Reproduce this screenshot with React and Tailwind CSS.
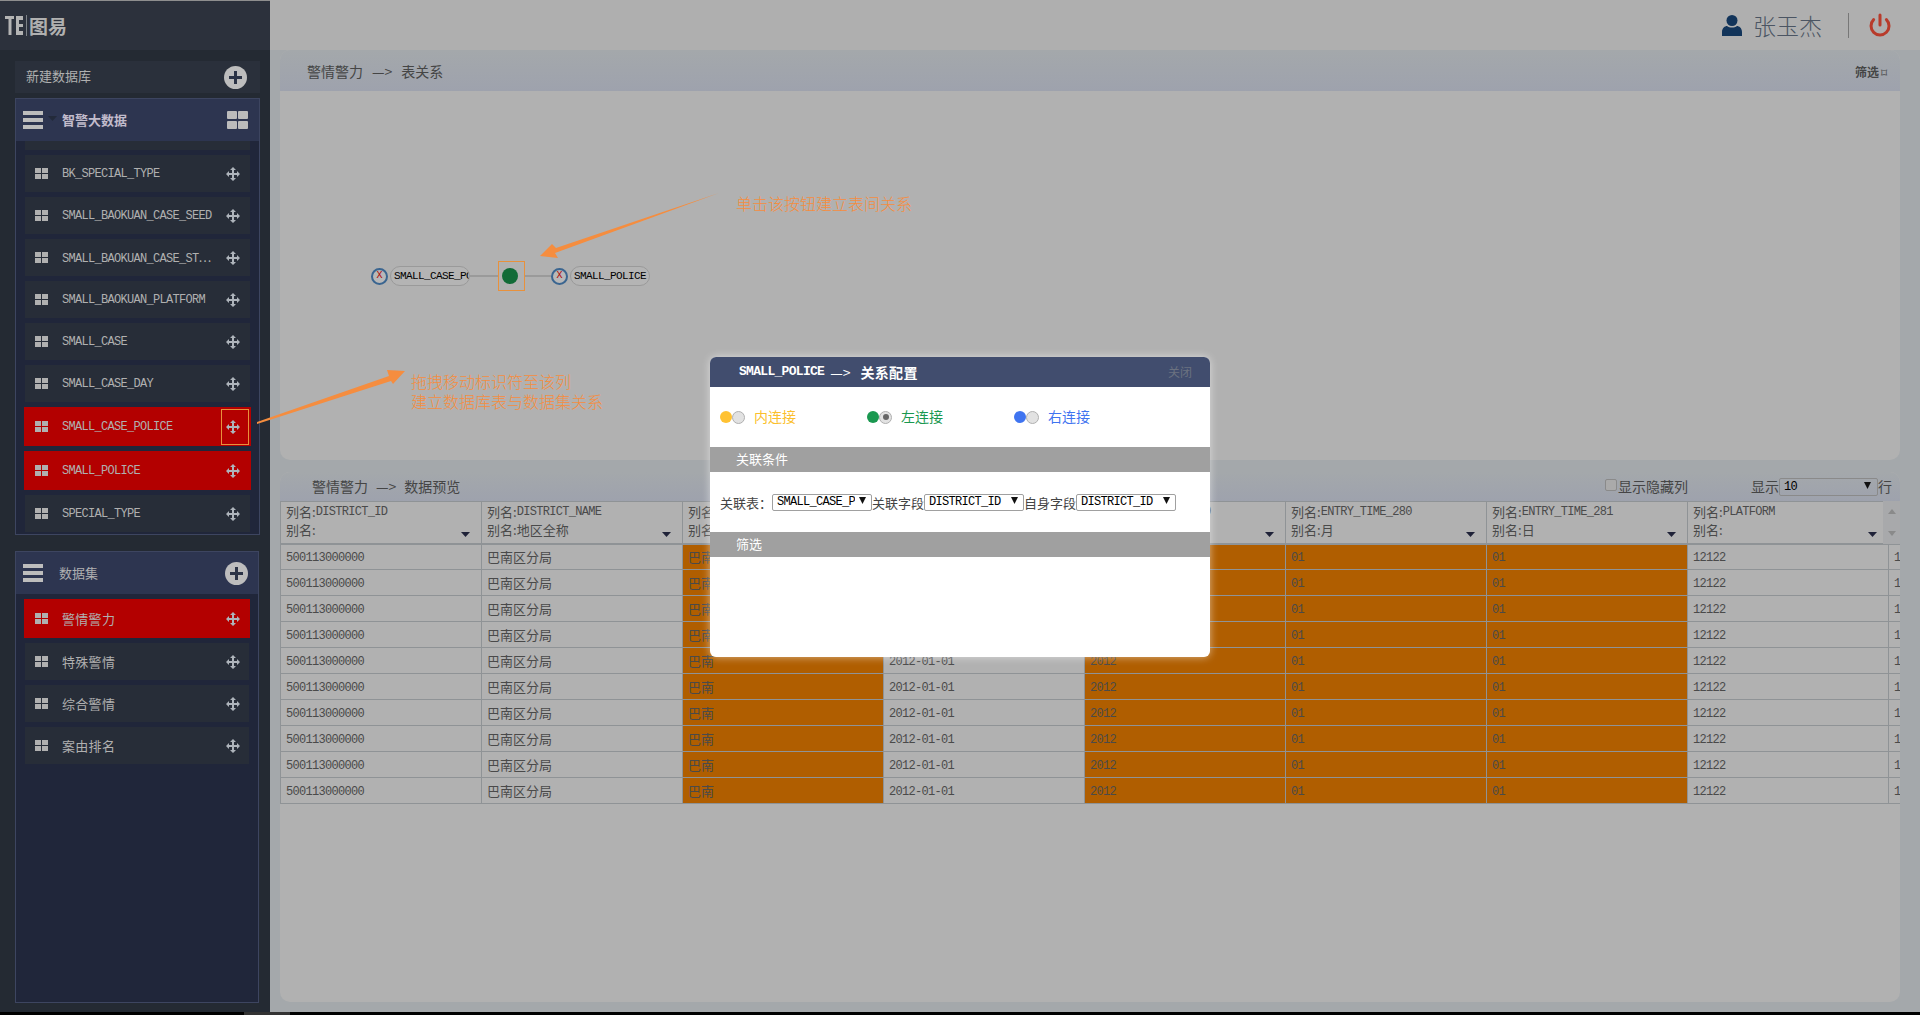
import React from 'react'
import { Power } from 'lucide-react'

const CJK = "font-['Noto_Sans_CJK_SC','Liberation_Sans',sans-serif]"
const MONO = "font-['Liberation_Mono','Noto_Sans_CJK_SC',monospace]"

const dbTables = [
  { name: 'BK_SPECIAL_TYPE' },
  { name: 'SMALL_BAOKUAN_CASE_SEED' },
  { name: 'SMALL_BAOKUAN_CASE_ST', more: true },
  { name: 'SMALL_BAOKUAN_PLATFORM' },
  { name: 'SMALL_CASE' },
  { name: 'SMALL_CASE_DAY' },
  { name: 'SMALL_CASE_POLICE', active: true, marked: true },
  { name: 'SMALL_POLICE', active: true },
  { name: 'SPECIAL_TYPE' },
]

const dataSets = [
  { name: '警情警力', active: true, cjk: true },
  { name: '特殊警情', cjk: true },
  { name: '综合警情', cjk: true },
  { name: '案由排名', cjk: true },
]

const columns = [
  { name: 'DISTRICT_ID', alias: '' },
  { name: 'DISTRICT_NAME', alias: '地区全称' },
  { name: 'DISTRICT_SHORT', alias: '地区简称' },
  { name: 'ENTRY_TIME', alias: '日期' },
  { name: 'ENTRY_TIME_279', alias: '年' },
  { name: 'ENTRY_TIME_280', alias: '月' },
  { name: 'ENTRY_TIME_281', alias: '日' },
  { name: 'PLATFORM', alias: '' },
  { name: 'PLATFORM_ID', alias: '' },
]

const row = [
  { text: '500113000000', mono: true },
  { text: '巴南区分局' },
  { text: '巴南', hot: true },
  { text: '2012-01-01', mono: true },
  { text: '2012', mono: true, hot: true },
  { text: '01', mono: true, hot: true },
  { text: '01', mono: true, hot: true },
  { text: '12122', mono: true },
  { text: '1', mono: true },
]

// tall narrow latin, same advance as the half-width letters in the picture
function Mono({ children, className = '' }){
  return <span className={`${MONO} text-[12px] tracking-[-0.7px] ${className}`}>{children}</span>
}

function Logo(){
  return (
    <svg width="24" height="22" viewBox="0 0 24 22" className="text-[#b4b4b4]">
      <path fill="currentColor" d="M0 1h9v3H6.500v16H3.500V4H0z" />
      <path fill="currentColor" d="M11 1h7v4h-4v4h4v3h-4v4h4v4h-7z" />
      <rect x="21" y="0" width="1" height="21" fill="#7d8288" />
    </svg>
  )
}

function GridIcon(){
  return (
    <svg width="13" height="11" viewBox="0 0 13 11" className="shrink-0">
      <rect x="0" y="0" width="6" height="5" fill="#b0b0b0" />
      <rect x="7" y="0" width="6" height="5" fill="#b0b0b0" />
      <rect x="0" y="6" width="6" height="5" fill="#b0b0b0" />
      <rect x="7" y="6" width="6" height="5" fill="#b0b0b0" />
    </svg>
  )
}

function MoveIcon(){
  return (
    <svg width="14" height="14" viewBox="0 0 14 14" className="shrink-0">
      <polygon fill="#aeb4bb" points="7,0 10,3 8,3 8,6 11,6 11,4 14,7 11,10 11,8 8,8 8,11 10,11 7,14 4,11 6,11 6,8 3,8 3,10 0,7 3,4 3,6 6,6 6,3 4,3" />
    </svg>
  )
}

function PlusCircle(){
  return (
    <svg width="23" height="23" viewBox="0 0 23 23">
      <circle cx="11.500" cy="11.500" r="11.500" fill="#bdbdbd" />
      <path d="M10 5h3v5h5v3h-5v5h-3v-5H5v-3h5z" fill="#2b3346" />
    </svg>
  )
}

function MenuIcon(){
  return (
    <div className="flex flex-col gap-[3px] w-[20px] shrink-0">
      <div className="h-[4px] bg-[#bdbdbd]" />
      <div className="h-[4px] bg-[#bdbdbd]" />
      <div className="h-[4px] bg-[#bdbdbd]" />
    </div>
  )
}

function SideItem({ item, group2 }){
  const cls = item.active
    ? `h-[39px] -mx-px bg-[#b30000] ${group2 ? 'pl-[11px] pr-[10px]' : 'pl-[11px] pr-[11px]'}`
    : `h-[37px] bg-[#272d38] ${group2 ? 'pl-[10px] pr-[9px]' : 'pl-[10px] pr-[10px]'}`
  return (
    <div className={`relative flex items-center shrink-0 ${cls}`}>
      <GridIcon />
      {item.cjk
        ? <span className="ml-[14px] text-[13px] text-[#b0b0b0] tracking-[0.3px]">{item.name}</span>
        : <Mono className="ml-[14px] text-[#b0b0b0] whitespace-nowrap">{item.name}{item.more && <span className={CJK}>⋯</span>}</Mono>}
      <div className="ml-auto"><MoveIcon /></div>
      {item.marked && <div className="absolute right-[2px] top-[2px] w-[28px] h-[36px] border border-[#e8913c]" />}
    </div>
  )
}

function Sidebar(){
  return (
    <aside className="w-[270px] shrink-0 bg-[#242a33] flex flex-col">
      <div className="h-[50px] shrink-0 bg-[#2c313c] border-t border-[#8e8e8e] flex items-center pl-[5px]">
        <Logo />
        <span className="text-[19px] font-bold leading-none text-[#b0b0b0]">图易</span>
      </div>
      <div className="flex-1 flex flex-col pl-[15px] pr-[10px] pt-[11px] pb-[9px] min-h-0">
        <div className="h-[32px] shrink-0 bg-[#2a303b] flex items-center justify-between pl-[11px] pr-[13px] mb-[5px]">
          <span className="text-[13px] text-[#b0b0b0] -mt-[2px]">新建数据库</span>
          <PlusCircle />
        </div>

        <section className="shrink-0 border border-[#3d4560] bg-[#20263a] pb-[2px]">
          <div className="h-[42px] bg-[#2d3550] flex items-center pl-[7px] pr-[11px]">
            <MenuIcon />
            <svg width="9" height="5" viewBox="0 0 9 5" className="ml-[5px] -mt-[4px] shrink-0"><path d="M0 0h9L4.500 5z" fill="#232a3a" /></svg>
            <span className="ml-[5px] text-[13px] font-bold text-[#c2bccc]">智警大数据</span>
            <svg width="21" height="18" viewBox="0 0 21 18" className="ml-auto">
              <rect x="0" y="0" width="10" height="8" rx="1" fill="#bcbcbc" />
              <rect x="11" y="0" width="10" height="8" rx="1" fill="#bcbcbc" />
              <rect x="0" y="10" width="10" height="8" rx="1" fill="#bcbcbc" />
              <rect x="11" y="10" width="10" height="8" rx="1" fill="#bcbcbc" />
            </svg>
          </div>
          <div className="flex flex-col gap-[5px] px-[9px]">
            <div className="h-[9px] bg-[#272d38]" />
            {dbTables.map(t => <SideItem key={t.name} item={t} />)}
          </div>
        </section>

        <section className="flex-1 mt-[16px] mr-px border border-[#3d4560] bg-[#20263a]">
          <div className="h-[42px] bg-[#2d3550] flex items-center pl-[7px] pr-[10px]">
            <MenuIcon />
            <span className="ml-[16px] text-[13px] text-[#b0b0b0]">数据集</span>
            <div className="ml-auto"><PlusCircle /></div>
          </div>
          <div className="flex flex-col gap-[5px] px-[9px] pt-[5px]">
            {dataSets.map(d => <SideItem key={d.name} item={d} group2 />)}
          </div>
        </section>
      </div>
    </aside>
  )
}

function Caret(){
  return <svg width="9" height="5" viewBox="0 0 9 5" className="absolute right-[11px] bottom-[6px]"><path d="M0 0h9L4.500 5z" fill="#1f2238" /></svg>
}

function Diagram(){
  const X = () => (
    <div className="w-[17px] h-[17px] rounded-full border-2 border-[#3a6590] bg-[#b8b8b8] flex items-center justify-center shrink-0">
      <span className={`${MONO} text-[10px] text-[#b00000] leading-none`}>X</span>
    </div>
  )
  const Pill = ({ children }) => (
    <div className="ml-[2px] w-[80px] h-[20px] rounded-full border border-[#9a9a9a] bg-[#b4b4b4] overflow-hidden flex items-center pl-[3px] shrink-0">
      <span className={`${MONO} text-[11px] tracking-[-0.6px] text-black whitespace-nowrap`}>{children}</span>
    </div>
  )
  return (
    <div className="absolute left-[91px] top-[170px] flex items-center">
      <X />
      <Pill>SMALL_CASE_POLICE</Pill>
      <div className="w-[28px] h-[2px] bg-[#9a9a9a]" />
      <div className="w-[27px] h-[30px] border border-[#e8913c] flex items-center justify-center pr-[3px] shrink-0">
        <div className="w-[16px] h-[16px] rounded-full bg-[#116b37]" />
      </div>
      <div className="w-[26px] h-[2px] bg-[#9a9a9a]" />
      <X />
      <Pill>SMALL_POLICE</Pill>
    </div>
  )
}

function DataTable(){
  return (
    <div className="relative flex-1 min-h-0 overflow-hidden">
      <table className="table-fixed border-collapse w-[1809px] text-[#4a4a4a]">
        <thead>
          <tr>
            {columns.map(c => (
              <th key={c.name} className="relative w-[201px] h-[42px] p-0 pl-[5px] border border-b-2 border-[#8f9396] text-left font-normal align-top">
                <div className="h-[17px] mt-[1px] flex items-center text-[13px] leading-none whitespace-nowrap">列名:<Mono>{c.name}</Mono></div>
                <div className="h-[19px] flex items-center text-[13px] leading-none whitespace-nowrap">别名:{c.alias}</div>
                <Caret />
              </th>
            ))}
          </tr>
        </thead>
        <tbody>
          {Array.from({ length: 10 }).map((_, r) => (
            <tr key={r}>
              {row.map((cell, i) => (
                <td key={i} className={`h-[26px] p-0 pl-[5px] pb-px border border-[#8f9396] text-[13px] leading-none ${cell.hot ? 'bg-[#b05e00]' : ''}`}>
                  {cell.mono ? <Mono>{cell.text}</Mono> : cell.text}
                </td>
              ))}
            </tr>
          ))}
        </tbody>
      </table>
      <div className="absolute right-0 top-0 w-[17px] h-[43px] bg-[#a8a9ab] flex flex-col items-center justify-between py-[8px]">
        <svg width="8" height="5" viewBox="0 0 8 5"><path d="M0 5h8L4 0z" fill="#8a8a8a" /></svg>
        <svg width="8" height="5" viewBox="0 0 8 5"><path d="M0 0h8L4 5z" fill="#8a8a8a" /></svg>
      </div>
    </div>
  )
}

function FakeSelect({ value, className = '' }){
  return (
    <div className={`h-[17px] border border-[#a0a0a0] rounded-[2px] flex items-center pl-[4px] pr-[5px] overflow-hidden shrink-0 ${className}`}>
      <Mono className="flex-1 overflow-hidden whitespace-nowrap text-black">{value}</Mono>
      <svg width="7" height="7" viewBox="0 0 7 7" className="ml-[4px] shrink-0 -mt-[3px]"><path d="M0 0h7L3.500 7z" fill="#111" /></svg>
    </div>
  )
}

function JoinOption({ dot, text, label, checked, className = '' }){
  return (
    <div className={`flex items-center ${className}`}>
      <div className={`w-[12px] h-[12px] rounded-full ${dot}`} />
      <div className="w-[13px] h-[13px] rounded-full border border-[#b0b0b0] bg-[#e2e2e2] flex items-center justify-center">
        {checked && <div className="w-[6px] h-[6px] rounded-full bg-[#666]" />}
      </div>
      <span className={`ml-[9px] -mt-[2px] text-[14px] leading-none ${text}`}>{label}</span>
    </div>
  )
}

function RelationDialog(){
  return (
    <div className="absolute left-[710px] top-[357px] w-[500px] h-[300px] bg-white rounded-[6px] overflow-hidden shadow-[0_0_8px_rgba(255,255,255,0.55)] text-[13px] text-[#444]">
      <div className="h-[30px] bg-[#414d6e] flex items-center pl-[29px] pr-[18px] text-white">
        <Mono className="font-bold text-[13px] tracking-[-0.6px]">SMALL_POLICE</Mono>
        <span className="ml-[6px] text-[14px]">—&gt;</span>
        <span className="ml-[10px] text-[14px] font-bold tracking-[0.3px]">关系配置</span>
        <span className="ml-auto text-[12px] text-[#6b7280]">关闭</span>
      </div>
      <div className="h-[60px] flex items-center pl-[10px]">
        <JoinOption dot="bg-[#ffc233]" text="text-[#fbbf2d]" label="内连接" className="w-[147px]" />
        <JoinOption dot="bg-[#1a9850]" text="text-[#1a9850]" label="左连接" checked className="w-[147px]" />
        <JoinOption dot="bg-[#3f74f0]" text="text-[#3f74f0]" label="右连接" />
      </div>
      <div className="h-[25px] bg-[#a0a0a0] flex items-center pl-[26px] pb-[2px] text-white">关联条件</div>
      <div className="h-[60px] flex items-center pl-[10px] leading-none">
        <span className="w-[52px] shrink-0">关联表：</span>
        <FakeSelect value="SMALL_CASE_POLICE" className="w-[100px]" />
        <span className="w-[52px] shrink-0">关联字段</span>
        <FakeSelect value="DISTRICT_ID" className="w-[100px]" />
        <span className="w-[52px] shrink-0">自身字段</span>
        <FakeSelect value="DISTRICT_ID" className="w-[100px]" />
      </div>
      <div className="h-[25px] bg-[#a0a0a0] flex items-center pl-[26px] pb-[2px] text-white">筛选</div>
    </div>
  )
}

function Notes(){
  return (
    <>
      <svg className="absolute inset-0 pointer-events-none" width="1920" height="1015">
        <polygon fill="#f58d3f" points="719,193 556,248 552,244 540,256 558,258 555,253" />
        <polygon fill="#f58d3f" points="257,422 257,424 391,381 393,384 405,371 387,370 389,376" />
      </svg>
      <div className="absolute left-[736px] top-[192px] text-[16px] leading-[22px] text-[#f58d3f] font-light">单击该按钮建立表间关系</div>
      <div className="absolute left-[411px] top-[371px] text-[16px] leading-[20px] text-[#f58d3f] font-light">
        <div>拖拽移动标识符至该列</div>
        <div>建立数据库表与数据集关系</div>
      </div>
    </>
  )
}

export default function App(){
  return (
    <div className={`relative w-full h-screen overflow-hidden flex flex-col ${CJK}`}>
      <div className="flex-1 min-h-0 flex">
        <Sidebar />
        <main className="flex-1 min-w-0 flex flex-col bg-[#a4a8ab]">
          <header className="h-[50px] shrink-0 bg-[#afafaf] flex items-center justify-end pr-[28px] text-[#4b5563]">
            <svg width="20" height="21" viewBox="0 0 20 21">
              <circle cx="10" cy="5.500" r="5.500" fill="#12345a" />
              <path d="M0 21v-4c0-4 3-6 5-6 1.500 1 3 1.600 5 1.600s3.500-.6 5-1.600c2 0 5 2 5 6v4z" fill="#12345a" />
            </svg>
            <span className="ml-[11px] text-[23px] font-light leading-none">张玉杰</span>
            <div className="ml-[26px] w-px h-[25px] bg-[#777]" />
            <Power size={24} strokeWidth={3} className="ml-[19px] text-[#b83b2b]" />
          </header>

          <div className="flex-1 min-h-0 flex flex-col pl-[10px] pr-[20px] pb-[10px]">
            <section className="h-[410px] shrink-0 flex flex-col rounded-[10px] overflow-hidden bg-[#b1b1b1]">
              <div className="h-[41px] shrink-0 bg-linear-to-b from-[#a4a8ab] to-[#9ea2ad] flex items-center justify-between pl-[27px] pr-[13px] text-[#454545]">
                <span className="text-[14px] mt-[2px]">警情警力<span className="mx-[9px]">—&gt;</span>表关系</span>
                <span className="text-[12px] font-bold mt-[2px]">筛选<span className="ml-[2px] text-[12px] font-normal">⌑</span></span>
              </div>
              <div className="relative flex-1">
                <Diagram />
              </div>
            </section>

            <section className="flex-1 min-h-0 mt-[12px] flex flex-col rounded-[10px] overflow-hidden bg-[#b1b1b1]">
              <div className="h-[29px] shrink-0 bg-linear-to-b from-[#a4a8ab] to-[#9ea2ad] flex items-center pl-[32px] pr-[8px] text-[14px] text-[#454545]">
                <span>警情警力<span className="mx-[8px]">—&gt;</span>数据预览</span>
                <label className="ml-auto flex items-center">
                  <span className="w-[12px] h-[12px] rounded-[2px] border border-[#8a8a8a] bg-[#aaa] -mt-[3px]" />
                  <span className="ml-px">显示隐藏列</span>
                </label>
                <span className="ml-[63px]">显示</span>
                <div className="w-[99px] h-[18px] border border-[#8a8a8a] rounded-[2px] flex items-center pl-[4px] pr-[6px]">
                  <Mono className="flex-1 text-black">10</Mono>
                  <svg width="7" height="7" viewBox="0 0 7 7" className="-mt-[3px]"><path d="M0 0h7L3.500 7z" fill="#111" /></svg>
                </div>
                <span>行</span>
              </div>
              <DataTable />
            </section>
          </div>
        </main>
      </div>
      <div className="h-[3px] shrink-0 bg-black relative">
        <div className="absolute left-[244px] w-[46px] h-[3px] bg-[#333]" />
      </div>
      <RelationDialog />
      <Notes />
    </div>
  )
}
